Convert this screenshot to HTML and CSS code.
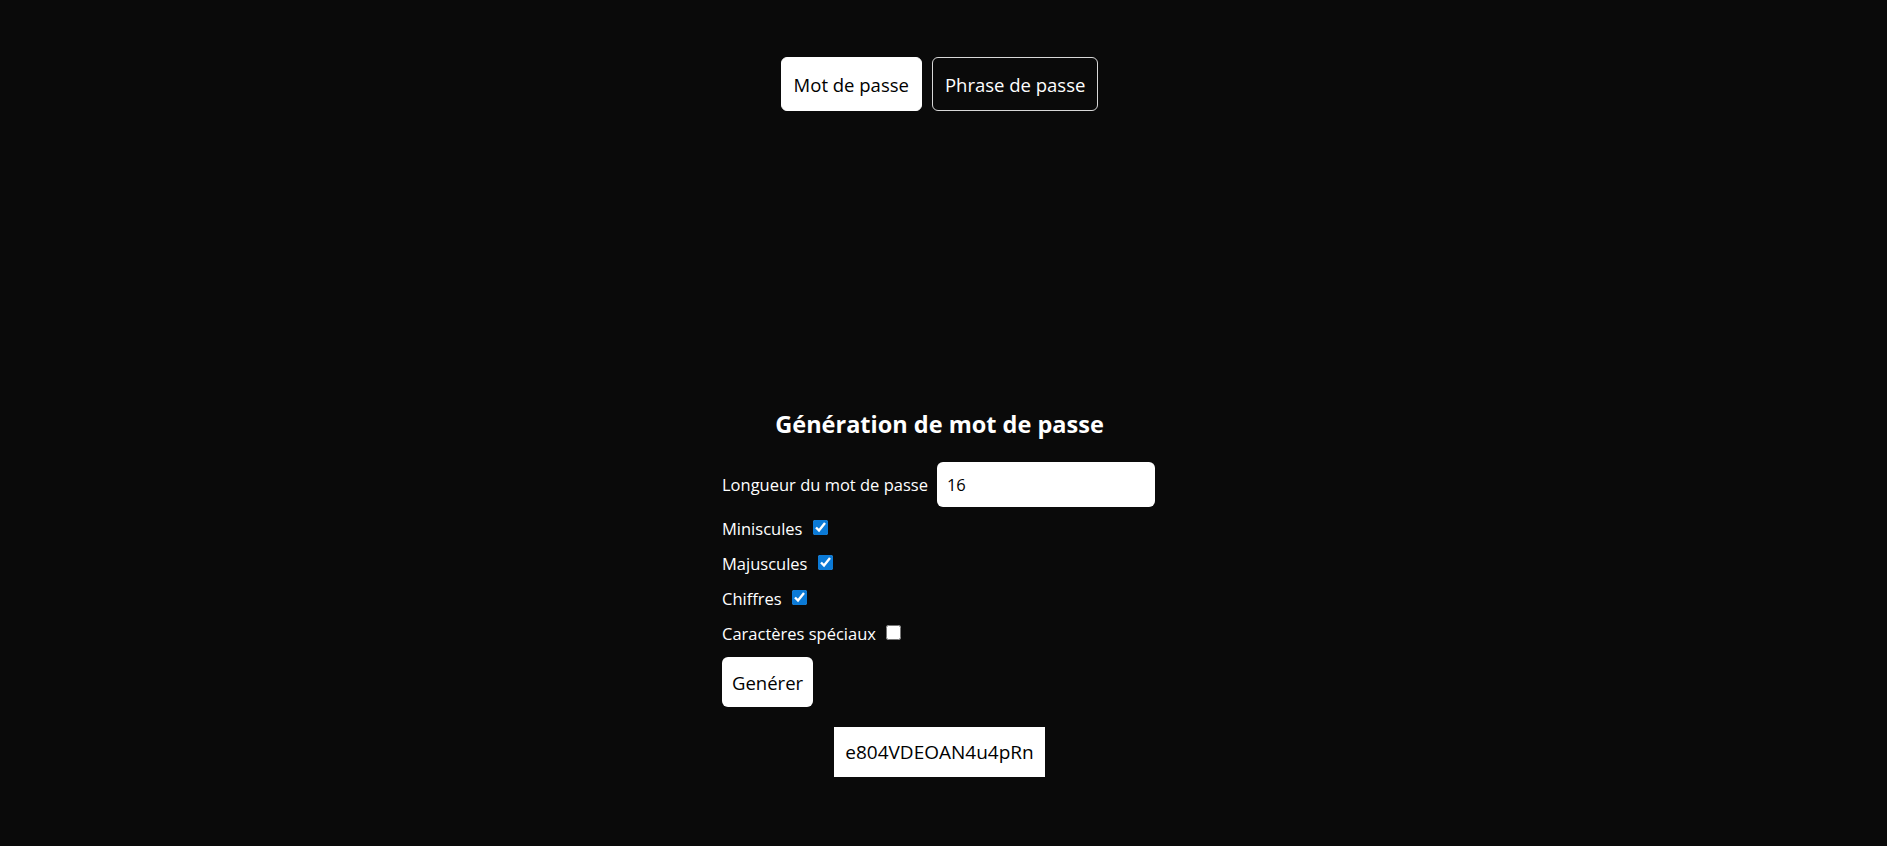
FILE: index.html
```html
<!DOCTYPE html>
<html lang="fr">
<head>
<meta charset="utf-8">
<title>Générateur de mot de passe</title>
<link rel="stylesheet" href="styles.css">
</head>
<body>
<main class="app">
  <nav class="tabs">
    <button class="tab tab-active" type="button">Mot de passe</button>
    <button class="tab" type="button">Phrase de passe</button>
  </nav>
  <section class="generator">
    <h2 class="title">Génération de mot de passe</h2>
    <form class="form">
      <div class="field">
        <label class="field-label" for="len">Longueur du mot de passe</label>
        <input class="field-input" id="len" type="text" value="16">
      </div>
      <label class="check">Miniscules <input class="check-box" type="checkbox" checked></label>
      <label class="check">Majuscules <input class="check-box" type="checkbox" checked></label>
      <label class="check">Chiffres <input class="check-box" type="checkbox" checked></label>
      <label class="check">Caractères spéciaux <input class="check-box" type="checkbox"></label>
      <div class="actions">
        <button class="generate" type="button">Genérer</button>
      </div>
    </form>
    <div class="result-wrap">
      <div class="result">e804VDEOAN4u4pRn</div>
    </div>
  </section>
</main>
</body>
</html>
```

FILE: styles.css
```css
html, body {
  margin: 0;
  padding: 0;
  background: #0a0a0a;
}

body {
  color: #ffffff;
  font-family: "Open Sans", "Noto Sans", sans-serif;
  font-size: 16.5px;
}

.app {
  width: 1879px;
  display: flex;
  flex-direction: column;
  align-items: center;
}

.tabs {
  margin-top: 57px;
  display: flex;
  gap: 10px;
}

.tab {
  height: 54px;
  padding: 0 12px;
  border-radius: 6px;
  border: 1px solid #d8d8d8;
  background: #0a0a0a;
  color: #ffffff;
  font-family: inherit;
  font-size: 18.5px;
}

.tab-active {
  background: #ffffff;
  color: #000000;
  border-color: #ffffff;
}

.generator {
  margin-top: 298px;
  display: flex;
  flex-direction: column;
  align-items: center;
}

.title {
  margin: 0;
  font-size: 23.5px;
  font-weight: 700;
  line-height: 30px;
}

.form {
  margin-top: 23px;
  width: 435px;
  display: flex;
  flex-direction: column;
  align-items: flex-start;
  gap: 8px;
}

.field {
  display: flex;
  align-items: center;
  gap: 9px;
}

.field-label {
  white-space: nowrap;
  flex-shrink: 0;
}

.field-input {
  width: 218px;
  height: 45px;
  box-sizing: border-box;
  border: none;
  border-radius: 6px;
  padding: 0 10px;
  background: #ffffff;
  color: #000000;
  font-family: inherit;
  font-size: 16.5px;
}

.check {
  display: flex;
  align-items: center;
  line-height: 27px;
  height: 27px;
  white-space: pre;
}

.check-box {
  width: 15px;
  height: 15px;
  margin: 0 0 3px 6px;
  accent-color: #0b7ad6;
}

.actions {
  margin-top: 2px;
}

.generate {
  height: 50px;
  padding: 0 10px;
  border: none;
  border-radius: 6px;
  background: #ffffff;
  color: #000000;
  font-family: inherit;
  font-size: 18.5px;
}

.result-wrap {
  margin-top: 20px;
  display: flex;
  justify-content: center;
}

.result {
  height: 50px;
  padding: 0 11px;
  display: flex;
  align-items: center;
  background: #ffffff;
  color: #000000;
  font-size: 19px;
}
```
